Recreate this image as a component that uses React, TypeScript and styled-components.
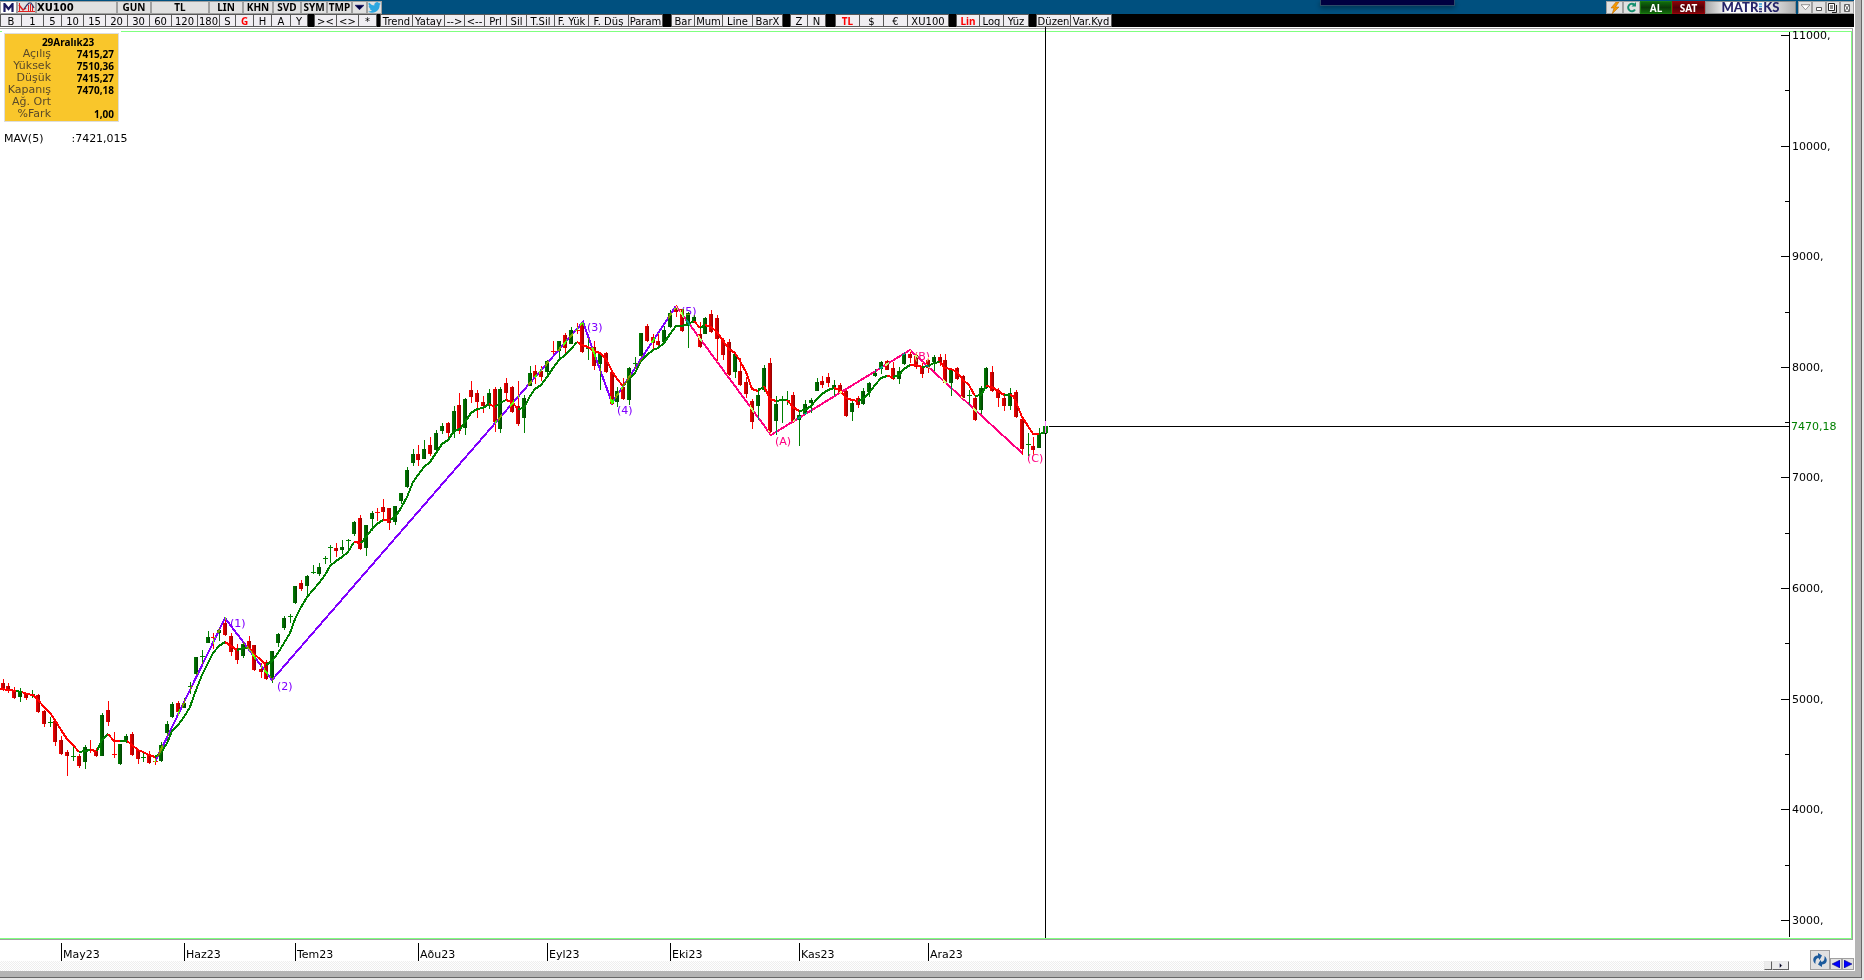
import React from "react";
import styled, { createGlobalStyle, css } from "styled-components";

const GlobalStyle = createGlobalStyle`
  * { box-sizing: border-box; }
  body { margin: 0; background: #e6e6e6; }
  button, input { font: inherit; color: inherit; margin: 0; border-radius: 0; }
`;

const TEXT = `"DejaVu Sans", Verdana, sans-serif`;
const BOLD = `"Noto Sans", Tahoma, sans-serif`;

/* ---------- window frame ---------- */

const Shell = styled.div`
  position: relative;
  min-height: 100vh;
  padding: 0 2px 2px 0;
  background: #e6e6e6;
  font: 11px/12px ${TEXT};
  color: #000;
`;

const Edge = styled.div`
  border: solid #686868;
  border-width: 0 1px 1px 0;
`;

const Content = styled.main`
  border: solid #b4b4b4;
  border-width: 0 6px 6px 0;
  padding-right: 1px;
  background: #fff;
`;

const Overlay = styled.div`
  position: absolute;
  top: 0;
  left: 1320px;
  width: 135px;
  height: 6px;
  background: #000040;
  border: 1px solid #2c4a68;
  border-top: 0;
  box-shadow: 0 2px 5px rgba(0, 0, 0, 0.35);
`;

/* ---------- top bars ---------- */

const TitleBar = styled.header`
  display: flex;
  align-items: stretch;
  height: 14px;
  padding-top: 1px;
  background: #00507f;
  font: bold 10px/11px ${BOLD};
`;

const Grow = styled.div`
  flex: 1;
`;

const TitleButton = styled.button<{ $w: number; $plain?: boolean }>`
  display: flex;
  align-items: center;
  justify-content: center;
  width: ${(p) => p.$w}px;
  padding: 0;
  border: 1px solid #a0a0a0;
  background: ${(p) => (p.$plain ? "#fff" : "#e1e1e1")};
  white-space: nowrap;
`;

const SymbolInput = styled.input`
  width: 81px;
  padding: 0;
  border: 1px solid #a0a0a0;
  background: #e1e1e1;
  font: bold 10px/11px ${TEXT};
`;

const TradeButton = styled.button<{ $w: number; $tone: "buy" | "sell" }>`
  width: ${(p) => p.$w}px;
  padding: 0;
  border: 1px solid;
  color: #fff;
  font: bold 10px/10px ${BOLD};
  ${(p) =>
    p.$tone === "buy"
      ? css`
          border-color: #1c7a10;
          background: linear-gradient(#0f6a0c, #0a3c08 50%, #126a0c);
        `
      : css`
          border-color: #96040a;
          background: linear-gradient(#860408, #520006 50%, #7c0408);
        `}
`;

const Brand = styled.div`
  display: flex;
  align-items: center;
  justify-content: center;
  width: 91px;
  margin-right: 2px;
  border: 1px solid #8c8c8c;
  background: linear-gradient(90deg, #a8a8a8, #fff 25%, #f4f4f4 65%, #b0b0b0);
  color: #26246a;
  font: 900 13px/11px Lato, ${BOLD};
`;

const ToolBar = styled.nav`
  display: flex;
  height: 13px;
  background: #000;
  font: 10px/11px ${TEXT};
`;

const ToolGroup = styled.div<{ $gap: number }>`
  display: flex;
  margin-left: ${(p) => p.$gap}px;
`;

const ToolButton = styled.button<{ $w: number; $on?: boolean }>`
  display: flex;
  align-items: center;
  justify-content: center;
  overflow: hidden;
  width: ${(p) => p.$w}px;
  padding: 1px 0 0;
  border: 1px solid #585858;
  border-left-width: 0;
  background: #f0eef2;
  white-space: nowrap;
  ${(p) =>
    p.$on &&
    css`
      color: #f00;
      font: bold 10px/11px ${BOLD};
    `}
  &:first-child {
    border-left-width: 1px;
  }
`;

/* ---------- chart panel ---------- */

const Panel = styled.section`
  position: relative;
  margin: 1px 1px 0 0;
  padding-top: 2px;
  border: solid #a0a0a0;
  border-width: 1px 1px 1px 0;
`;

const Plot = styled.div`
  display: flex;
  border: 1px solid #80ff80;
  border-left: 0;
`;

const Series = styled.svg`
  flex: 1;
  min-width: 0;
  height: 906px;
  overflow: visible;
`;

const Axis = styled.svg`
  flex: none;
  width: 70px;
  height: 906px;
  overflow: visible;
`;

// Drawing tools invert against whatever they cross.
const Ink = styled.g`
  mix-blend-mode: difference;
`;

const QuoteBox = styled.table`
  position: absolute;
  top: 4px;
  left: 4px;
  width: 115px;
  border: 1px solid #ddd;
  border-spacing: 0;
  background: #f9c62b;
  box-shadow: 0 0 0 2px #fff;

  th,
  td {
    padding: 0;
    height: 12px;
  }
  th {
    width: 47px;
    padding-right: 1px;
    text-align: right;
    font-weight: normal;
    color: #5a4a2a;
  }
  td {
    padding-right: 4px;
    text-align: right;
    font: bold 10px/12px ${BOLD};
  }
  thead th {
    padding: 2px 0 0 13px;
    height: 14px;
    text-align: center;
    color: #000;
    font: bold 10px/12px ${BOLD};
  }
  tbody tr:last-child > * {
    padding-bottom: 1px;
  }
`;

const Indicator = styled.div`
  position: absolute;
  top: 104px;
  left: 4px;
  display: flex;
  gap: 28px;
`;

/* ---------- footer ---------- */

const Footer = styled.footer`
  display: flex;
  align-items: flex-end;
  height: 31px;
`;

const Timeline = styled.div`
  flex: 1;
  min-width: 0;
`;

const TimeAxis = styled.svg`
  display: block;
  width: 100%;
  height: 21px;
`;

const ScrollTrack = styled.div`
  display: flex;
  justify-content: flex-end;
  height: 10px;
  background: repeating-conic-gradient(#eee 0 25%, #fff 0 50%) 0 0 / 2px 2px;
`;

const ScrollButton = styled.button<{ $w: number }>`
  display: flex;
  align-items: center;
  justify-content: center;
  width: ${(p) => p.$w}px;
  height: 9px;
  padding: 0;
  border: 1px solid;
  border-color: #e8e8e8 #606060 #606060 #e8e8e8;
  background: #ececec;
`;

const Corner = styled.div`
  display: flex;
  align-items: flex-end;
  padding: 0 0 1px 21px;
`;

const CornerButton = styled.button<{ $w: number; $h: number }>`
  display: flex;
  align-items: center;
  justify-content: center;
  width: ${(p) => p.$w}px;
  height: ${(p) => p.$h}px;
  padding: 0;
  border: 1px solid #a0a0a0;
  background: #e1e1e1;
`;

/* ---------- data ---------- */

type Tool = [label: string, width: number, on?: boolean];

const TOOLS: { gap: number; items: Tool[] }[] = [
  {
    gap: 0,
    items: [
      ["B", 22], ["1", 22], ["5", 18], ["10", 22], ["15", 22], ["20", 22], ["30", 22], ["60", 22],
      ["120", 26], ["180", 22], ["S", 16], ["G", 18, true], ["H", 18], ["A", 19], ["Y", 17],
    ],
  },
  { gap: 6, items: [["><", 23], ["<>", 22], ["*", 18]] },
  {
    gap: 3,
    items: [
      ["Trend", 33], ["Yatay", 32], ["-->", 20], ["<--", 20], ["Prl", 22], ["Sil", 20],
      ["T.Sil", 28], ["F. Yük", 34], ["F. Düş", 40], ["Param", 34],
    ],
  },
  { gap: 8, items: [["Bar", 24], ["Mum", 28], ["Line", 30], ["BarX", 30]] },
  { gap: 7, items: [["Z", 18], ["N", 18]] },
  { gap: 9, items: [["TL", 25, true], ["$", 24], ["€", 24], ["XU100", 41]] },
  { gap: 7, items: [["Lin", 24, true], ["Log", 24], ["Yüz", 25]] },
  { gap: 7, items: [["Düzen", 35], ["Var.Kyd", 41]] },
];

const MENU: [string, number][] = [
  ["GUN", 34], ["TL", 58], ["LIN", 34], ["KHN", 30], ["SVD", 28], ["SYM", 26], ["TMP", 25],
];

const QUOTE: [string, string][] = [
  ["Açılış", "7415,27"],
  ["Yüksek", "7510,36"],
  ["Düşük", "7415,27"],
  ["Kapanış", "7470,18"],
  ["Ağ. Ort", ""],
  ["%Fark", "1,00"],
];

// Bars as "x high bodyTop bodyBottom low", with u (up) or d (down).
const BARS = `
3 679 683 688 690 d;8 683 686 690 692 d;14 687 690 697 698 d;20 688 692 696 701 u;26 693 694 697 699 d;
32 690 694 695 697 u;38 694 695 711 712 d;44 710 711 723 726 d;50 717 722 723 726 u;55 720 721 741 745 d;
61 736 740 753 754 d;67 750 752 755 775 d;73 745 756 757 760 u;79 754 756 765 767 d;85 745 747 761 768 u;
90 740 749 750 752 d;96 748 750 755 756 d;102 713 715 755 755 u;108 701 710 721 725 d;114 732 754 755 757 d;
120 744 744 763 764 u;126 734 736 741 742 u;132 732 734 754 755 d;138 749 750 758 763 d;143 753 757 758 761 u;
149 751 755 762 763 d;155 755 761 762 764 d;161 742 745 760 761 u;167 721 724 732 735 u;172 702 704 716 717 u;
178 701 703 711 715 d;184 698 703 707 707 u;190 682 686 687 693 u;196 657 657 673 674 u;202 650 656 657 663 u;
208 631 637 642 642 u;213 633 637 638 648 d;219 628 630 632 640 u;225 617 623 634 635 d;231 633 636 651 655 d;
237 644 648 659 663 d;243 642 644 655 657 u;249 636 641 647 650 d;254 645 645 669 670 d;261 663 669 671 677 d;
266 660 662 678 679 d;272 651 651 677 682 u;278 633 634 642 646 u;284 616 618 627 629 u;290 614 616 617 622 u;
295 586 586 602 603 u;301 580 583 588 590 d;307 575 576 585 597 u;313 565 572 573 573 u;319 563 567 573 575 u;
325 556 558 559 563 u;330 545 547 548 562 u;336 543 548 550 556 d;342 540 547 549 553 u;348 539 540 541 549 u;
354 521 522 533 535 u;360 515 518 548 549 d;366 525 525 547 555 u;372 511 513 518 530 u;377 508 512 513 520 d;
383 499 507 511 520 d;389 508 508 522 529 d;395 506 506 521 524 u;401 493 493 500 503 u;407 467 470 486 487 u;
413 449 454 462 465 u;418 445 454 459 465 d;424 440 449 458 458 u;430 437 445 453 455 d;436 430 433 449 452 u;
442 423 426 430 433 u;448 422 423 432 438 d;454 406 411 431 437 u;459 393 405 430 433 d;465 398 399 427 434 u;
471 381 390 396 402 d;477 390 393 401 417 d;483 396 402 405 412 d;489 389 393 404 408 u;495 387 389 421 431 d;
500 387 389 428 432 u;506 378 383 392 400 d;512 386 387 411 412 d;518 381 406 423 425 d;524 395 398 417 432 u;
530 366 373 385 385 u;535 365 371 376 383 d;541 366 371 376 380 d;547 360 361 371 375 u;553 341 351 352 353 d;
559 341 341 350 357 u;565 333 335 347 353 d;571 327 330 343 343 u;577 323 330 331 333 d;582 322 323 351 352 d;
588 338 348 349 359 u;594 341 347 365 369 d;600 353 354 363 389 u;606 352 353 371 372 d;612 372 372 403 404 d;
617 387 391 401 406 u;623 378 387 398 399 d;629 367 368 399 404 u;635 357 363 364 368 u;641 333 333 355 356 u;
647 324 326 340 341 d;653 334 337 342 348 d;658 333 341 344 346 d;664 326 330 341 343 u;670 310 313 326 327 u;
676 305 308 311 316 d;682 309 309 330 331 d;688 312 313 325 347 u;694 315 317 322 322 u;700 322 334 346 347 d;
705 317 318 333 333 u;711 310 314 331 332 d;717 315 318 338 361 d;723 338 340 354 359 d;729 339 342 374 375 d;
735 353 354 371 377 u;740 358 371 384 385 d;746 377 382 393 397 d;752 399 401 421 428 d;758 388 395 405 419 u;
764 365 368 389 391 u;770 358 363 431 433 d;776 396 404 420 434 u;782 396 400 401 422 u;787 391 400 401 404 u;
793 392 395 420 422 d;799 410 415 419 445 u;805 400 404 413 414 u;811 398 400 402 412 u;817 378 382 390 390 u;
822 376 381 384 387 d;828 373 377 382 386 d;834 380 385 387 395 u;840 383 385 392 393 d;846 390 391 415 416 d;
852 400 403 411 420 u;858 396 398 404 407 d;863 388 391 403 404 u;869 382 383 391 396 u;875 369 373 375 376 u;
881 361 362 368 373 u;887 360 361 369 369 d;893 362 368 378 379 d;899 367 371 378 383 u;904 352 354 363 364 u;
910 350 354 357 362 d;916 353 355 366 368 d;922 362 366 373 377 d;928 357 360 367 372 d;934 355 357 361 370 u;
940 354 357 361 365 d;945 354 360 382 383 d;951 368 369 382 395 u;957 367 368 378 379 d;963 375 376 397 398 d;
969 390 395 396 404 u;975 397 398 419 420 d;981 386 388 409 413 u;986 367 368 387 388 u;992 366 372 390 391 d;
998 388 390 397 406 d;1004 393 398 405 410 d;1010 388 393 405 409 u;1016 390 392 416 417 d;1022 417 419 448 454 d;
1028 433 444 445 455 u;1033 437 446 449 454 d;1039 428 434 447 447 u;1045 424 426 433 433 u`
  .trim()
  .split(";")
  .map((row) => {
    const [x, high, top, bottom, low, dir] = row.trim().split(" ");
    return { x: +x, high: +high, top: +top, bottom: +bottom, low: +low, up: dir === "u" };
  });

// Moving average, split where its direction colour changes.
const AVERAGE: [up: boolean, points: string][] = [
  [false, "0,689 10,690 16,691"],
  [true, "16,691 22,692"],
  [false, "22,692 27,694 33,695 38,700 44,707 50,713 55,720 61,730 67,739 73,745 79,752"],
  [true, "79,752 85,751 90,750"],
  [false, "90,750 97,751"],
  [true, "97,751 102,740 108,734"],
  [false, "108,734 114,741 120,741"],
  [true, "120,741 127,741"],
  [false, "127,741 132,745 138,750 143,752 149,755 155,757"],
  [true, "155,757 161,753 167,743 172,731 178,725 184,717 190,707 196,690 202,675 208,663 213,653 219,646 225,642"],
  [false, "225,642 231,646 237,650"],
  [true, "237,650 243,648 249,648"],
  [false, "249,648 254,654 261,660 266,665"],
  [true, "266,665 272,661 278,653 284,643 290,633 295,619 300,609 307,597 313,590 319,583 325,575 330,566 336,561 342,557 348,552 354,542"],
  [false, "354,542 361,543"],
  [true, "361,543 366,537 372,529 377,524 383,520"],
  [false, "383,520 390,520"],
  [true, "390,520 395,517 401,508 407,497 413,482 418,475 424,467 430,462 436,453 442,444 448,440 454,431 460,429 465,422 471,413 477,409 483,408 489,404"],
  [false, "489,404 495,407"],
  [true, "495,407 500,403 506,400"],
  [false, "506,400 512,402 518,409"],
  [true, "518,409 524,408 530,396 535,389 541,385 547,377 553,368 559,360 565,355 571,349 577,342"],
  [false, "577,342 582,345 588,347 594,351 600,353 606,359 612,371 617,379 623,386"],
  [true, "623,386 629,379 635,373 641,361 647,355 653,350 658,348 664,343 670,334 676,326 682,326 688,324 694,321"],
  [false, "694,321 700,328"],
  [true, "700,328 705,325"],
  [false, "705,325 711,327 717,332 723,341 729,349 735,353 740,361 746,372 752,389 758,391"],
  [true, "758,391 764,386"],
  [false, "764,386 770,399 776,401"],
  [true, "776,401 782,400 787,400"],
  [false, "787,400 793,407 799,411"],
  [true, "799,411 805,410 811,406 817,399 822,394 828,390 834,388"],
  [false, "834,388 840,390 846,398 852,400 858,401"],
  [true, "858,401 863,399 869,393 875,385 881,378 887,376"],
  [false, "887,376 893,377"],
  [true, "893,377 899,375 904,369 910,365"],
  [false, "910,365 916,365 922,367"],
  [true, "922,367 928,366 934,363 940,362"],
  [false, "940,362 945,368 951,369 957,372 963,380 969,385 975,396"],
  [true, "975,396 981,395 986,386"],
  [false, "986,386 992,387 998,391 1004,395"],
  [true, "1004,395 1010,395"],
  [false, "1010,395 1013,396 1016,402 1022,417 1028,426 1033,434 1039,434"],
  [true, "1039,434 1046,432"],
];

// Complements of violet and magenta, which is how they show on white.
const IMPULSE = "#7fff00";
const CORRECTION = "#00ff7f";

const WAVES: [color: string, points: string][] = [
  [IMPULSE, "155,762 225,618 272,680 583,322 612,403 676,306"],
  [CORRECTION, "676,306 771,435 910,350 1022,453"],
];

const WAVE_LABELS: [text: string, x: number, y: number, color: string][] = [
  ["(1)", 230, 627, IMPULSE],
  ["(2)", 277, 690, IMPULSE],
  ["(3)", 587, 331, IMPULSE],
  ["(4)", 617, 414, IMPULSE],
  ["(5)", 681, 315, IMPULSE],
  ["(A)", 775, 445, CORRECTION],
  ["(B)", 914, 360, CORRECTION],
  ["(C)", 1027, 462, CORRECTION],
];

const MONTHS: [string, number][] = [
  ["May23", 61], ["Haz23", 184], ["Tem23", 295], ["Aðu23", 418],
  ["Eyl23", 547], ["Eki23", 670], ["Kas23", 799], ["Ara23", 928],
];

const TOP = 32; // bars above the plotting area
const LAST_Y = 426;
const priceY = (price: number) => Math.round(35 + (11000 - price) * 0.1106);
const PRICES = Array.from({ length: 17 }, (_, i) => 11000 - i * 500);

/* ---------- icons ---------- */

const WaveIcon = () => (
  <svg width="17" height="11" viewBox="0 0 17 11" fill="none">
    <path d="M1.500 1v9M10.500 3v6M12.500 2v8M14.500 3v7" stroke="#e02020" />
    <path d="M0 9.500h17" stroke="#e02020" />
    <path d="M1 3l4 5 3-2" stroke="#e02020" strokeWidth="1.500" />
    <path d="M6 7l3-4 2-2h2l2 3 1 2" stroke="#303060" strokeWidth="1.200" />
  </svg>
);

const BirdIcon = () => (
  <svg width="13" height="11" viewBox="0 0 24 20" fill="#2ca7e0">
    <path d="M24 2.4a9.800 9.800 0 0 1-2.800.8A5 5 0 0 0 23.300.500a10 10 0 0 1-3.100 1.200 4.900 4.900 0 0 0-8.400 4.500A14 14 0 0 1 1.700.900a5 5 0 0 0 1.500 6.600A5 5 0 0 1 1 6.900a5 5 0 0 0 4 4.900 5 5 0 0 1-2.200.1 4.900 4.900 0 0 0 4.600 3.400A10 10 0 0 1 0 17.500 14 14 0 0 0 21.500 5 10 10 0 0 0 24 2.400z" />
  </svg>
);

const BoltIcon = () => (
  <svg width="10" height="12" viewBox="0 0 10 12">
    <path d="M6 0L1 6h3L2 12l7-7H5.500L9 0z" fill="#f59a00" stroke="#b06000" strokeWidth=".5" />
  </svg>
);

const ReloadIcon = () => (
  <svg width="11" height="11" viewBox="0 0 11 11">
    <path d="M8.500 3A3.700 3.700 0 1 0 9 7.500" fill="none" stroke="#169070" strokeWidth="2" />
    <path d="M10 0v4.500H5.500z" fill="#169070" />
  </svg>
);

const SyncIcon = () => (
  <svg width="16" height="14" viewBox="0 0 16 14" fill="#1b5a9c">
    <path d="M3.500 11C-1 7 2 2 6 2.500V0l4 2.500L7.500 7 6.500 5C4.500 5 3 7.500 3.500 11z" />
    <path d="M12.500 3c4.500 4 1.500 9-2.500 8.500V14l-4-2.500L8.500 7l1 2c2 0 3.500-2.500 3-6z" />
  </svg>
);

const Arrow = ({ d, size = 8, fill = "#0000ff", stroke = "#000060" }: { d: string; size?: number; fill?: string; stroke?: string }) => (
  <svg width={size} height={size} viewBox="0 0 8 8">
    <path d={d} fill={fill} stroke={stroke} strokeWidth=".5" />
  </svg>
);

/* ---------- parts ---------- */

function Header() {
  return (
    <>
      <TitleBar>
        <TitleButton $w={17} $plain aria-label="Menu">
          <svg width="11" height="9" viewBox="0 0 11 9">
            <path d="M1.500 9V1l4 5 4-5v8" fill="none" stroke="#1a1a60" strokeWidth="2.200" />
          </svg>
        </TitleButton>
        <TitleButton $w={19} aria-label="Indicators">
          <WaveIcon />
        </TitleButton>
        <SymbolInput aria-label="Symbol" defaultValue="XU100" />
        {MENU.map(([label, w]) => (
          <TitleButton key={label} $w={w}>
            {label}
          </TitleButton>
        ))}
        <TitleButton $w={15} aria-label="More">
          <Arrow d="M0 2h8L4 6z" size={9} fill="#000040" />
        </TitleButton>
        <TitleButton $w={15} aria-label="Share">
          <BirdIcon />
        </TitleButton>
        <Grow />
        <TitleButton $w={17} aria-label="Quick order">
          <BoltIcon />
        </TitleButton>
        <TitleButton $w={17} aria-label="Reload">
          <ReloadIcon />
        </TitleButton>
        <TradeButton $w={32} $tone="buy">AL</TradeButton>
        <TradeButton $w={33} $tone="sell">SAT</TradeButton>
        <Brand>
          MATR
          <svg width="5" height="10" viewBox="0 0 5 10">
            <path d="M1 1h3M1 3.500h3" stroke="#3a9ad8" strokeWidth="1.500" />
            <path d="M1 6h3M1 8.500h3" stroke="#26246a" strokeWidth="1.500" />
          </svg>
          KS
        </Brand>
        <TitleButton $w={14} aria-label="Collapse">
          <Arrow d="M0 1.500h8L4 6z" size={9} fill="#fff" stroke="#505050" />
        </TitleButton>
        <TitleButton $w={14} aria-label="Minimize">
          <svg width="8" height="9"><path d="M1.500 4.500h5v3h-5z" fill="#fff" stroke="#555" /></svg>
        </TitleButton>
        <TitleButton $w={14} aria-label="Restore">
          <svg width="10" height="10">
            <path d="M.5.5h6v7h-6z" fill="#fff" stroke="#222" />
            <path d="M2 3h3M2 5h3M8.500 2v7.500H4" fill="none" stroke="#222" />
          </svg>
        </TitleButton>
        <TitleButton $w={14} aria-label="Close">
          <svg width="7" height="8"><path d="M.5.5h5v7h-5zM1 1l4 6M5 1L1 7" fill="#fff" stroke="#666" /></svg>
        </TitleButton>
      </TitleBar>
      <ToolBar>
        {TOOLS.map((group, i) => (
          <ToolGroup key={i} $gap={group.gap}>
            {group.items.map(([label, w, on]) => (
              <ToolButton key={label} $w={w} $on={on}>
                {label}
              </ToolButton>
            ))}
          </ToolGroup>
        ))}
      </ToolBar>
    </>
  );
}

function Candles() {
  return (
    <g shapeRendering="crispEdges">
      {BARS.map((b) => (
        <g key={b.x} fill={b.up ? "#008000" : "#f00"}>
          <rect x={b.x} y={b.high} width="1" height={b.low - b.high + 1} />
          {b.bottom - b.top < 2 ? (
            <rect x={b.x - 2} y={b.top} width="5" height="1" />
          ) : (
            <rect
              x={b.x - 2}
              y={b.top}
              width="4"
              height={b.bottom - b.top + 1}
              fill={b.up ? "url(#up)" : "url(#down)"}
            />
          )}
        </g>
      ))}
    </g>
  );
}

function Chart() {
  return (
    <Panel>
      <Plot>
        <Series role="img" aria-label="XU100">
          <defs>
            <linearGradient id="up">
              <stop offset="0" stopColor="#008000" />
              <stop offset="1" stopColor="#004000" />
            </linearGradient>
            <linearGradient id="down">
              <stop offset="0" stopColor="#ff0000" />
              <stop offset="1" stopColor="#900000" />
            </linearGradient>
          </defs>
          <g transform={`translate(0 ${-TOP})`}>
            <rect y={TOP} width="100%" height="906" fill="#fff" />
            <Candles />
            <g fill="none" strokeWidth="2" strokeLinejoin="round" shapeRendering="crispEdges">
              {AVERAGE.map(([up, points], i) => (
                <polyline key={i} points={points} stroke={up ? "#008000" : "#f00"} />
              ))}
            </g>
            <Ink>
              {WAVES.map(([color, points]) => (
                <polyline
                  key={color}
                  points={points}
                  fill="none"
                  stroke={color}
                  strokeWidth="2"
                  shapeRendering="crispEdges"
                />
              ))}
              {WAVE_LABELS.map(([text, x, y, color]) => (
                <text key={text} x={x} y={y} fill={color}>
                  {text}
                </text>
              ))}
            </Ink>
            <g fill="#000" shapeRendering="crispEdges">
              <rect x="1045" y="27" width="1" height="911" />
              <path d="M1043 426h2v7h-2zM1046 426h2v7h-2z" fill="#008000" />
              <rect x="1045" y="421" width="1" height="12" fill="#ff80ff" />
            </g>
          </g>
          <svg x="1049" y={LAST_Y - TOP} width="100%" height="1" overflow="visible">
            <line x1="0" x2="100%" y1="0" y2="0" stroke="none" />
          </svg>
          <line
            x1="100%"
            x2="1049"
            y1={LAST_Y - TOP + 0.5}
            y2={LAST_Y - TOP + 0.5}
            stroke="#000"
            shapeRendering="crispEdges"
          />
        </Series>
        <Axis role="img" aria-label="Price axis">
          <g transform={`translate(0 ${-TOP})`}>
            <g shapeRendering="crispEdges">
              <rect x="8" y="32" width="1" height="905" />
              <rect x="0" y={LAST_Y} width="8" height="1" />
              {PRICES.map((p) => {
                const len = p % 1000 ? 4 : 8;
                return <rect key={p} x={8 - len} y={priceY(p)} width={len} height="1" />;
              })}
            </g>
            {PRICES.filter((p) => p % 1000 === 0).map((p) => (
              <text key={p} x="11" y={priceY(p) + 4}>
                {p},
              </text>
            ))}
            <text x="10" y={LAST_Y + 4} fill="#008000">
              7470,18
            </text>
          </g>
        </Axis>
      </Plot>
      <QuoteBox>
        <thead>
          <tr>
            <th colSpan={2}>29Aralık23</th>
          </tr>
        </thead>
        <tbody>
          {QUOTE.map(([label, value]) => (
            <tr key={label}>
              <th scope="row">{label}</th>
              <td>{value}</td>
            </tr>
          ))}
        </tbody>
      </QuoteBox>
      <Indicator>
        <span>MAV(5)</span>
        <span>:7421,015</span>
      </Indicator>
    </Panel>
  );
}

export default function App() {
  return (
    <Shell>
      <GlobalStyle />
      <Edge>
        <Content>
          <Header />
          <Chart />
          <Footer>
            <Timeline>
              <TimeAxis role="img" aria-label="Months">
                {MONTHS.map(([label, x]) => (
                  <g key={label}>
                    <rect x={x} y="3" width="1" height="18" />
                    <text x={x + 2} y="18">
                      {label}
                    </text>
                  </g>
                ))}
              </TimeAxis>
              <ScrollTrack>
                <ScrollButton $w={8} aria-label="Scroll thumb" />
                <ScrollButton $w={17} aria-label="Scroll right">
                  <Arrow d="M3 1l3 3-3 3z" size={5} fill="#000" />
                </ScrollButton>
              </ScrollTrack>
            </Timeline>
            <Corner>
              <CornerButton $w={20} $h={20} aria-label="Refresh">
                <SyncIcon />
              </CornerButton>
              <CornerButton $w={12} $h={12} aria-label="Previous">
                <Arrow d="M8 0v8L0 4z" />
              </CornerButton>
              <CornerButton $w={12} $h={12} aria-label="Next">
                <Arrow d="M0 0v8l8-4z" />
              </CornerButton>
            </Corner>
          </Footer>
        </Content>
      </Edge>
      <Overlay />
    </Shell>
  );
}
